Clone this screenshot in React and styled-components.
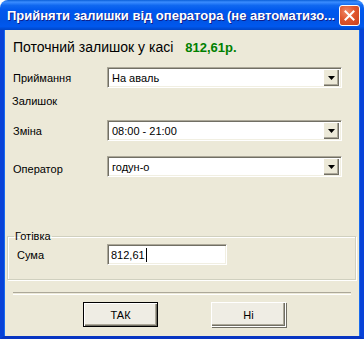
import React from 'react';
import styled, { createGlobalStyle } from 'styled-components';

const GlobalStyle = createGlobalStyle`
  html, body { margin: 0; padding: 0; background: #ffffff; }
  body {
    font-family: "Liberation Sans", Arial, sans-serif;
    font-size: 11px;
    color: #000;
  }
`;

const Window = styled.div`
  width: 364px;
  height: 339px;
  display: flex;
  flex-direction: column;
  box-sizing: border-box;
`;

const TitleBar = styled.div`
  height: 30px;
  flex: none;
  display: flex;
  align-items: center;
  justify-content: space-between;
  padding: 0 4px 0 7px;
  box-sizing: border-box;
  border-radius: 8px 8px 0 0;
  background: linear-gradient(
    to bottom,
    #0a5fd8 0%,
    #3b8dff 7%,
    #1068f0 18%,
    #0058ee 35%,
    #0055e6 70%,
    #0058ee 88%,
    #0045c6 100%
  );
  color: #fff;
  font-family: "Liberation Sans", Arial, sans-serif;
  font-weight: bold;
  font-size: 13px;
  text-shadow: 1px 1px #0f1e8a;
  white-space: nowrap;
`;

const CloseButton = styled.div`
  width: 21px;
  height: 21px;
  box-sizing: border-box;
  border: 1px solid #fff;
  border-radius: 3px;
  background: radial-gradient(circle at 35% 30%, #f08a6a 0%, #e0562e 45%, #c8401c 100%);
  display: flex;
  align-items: center;
  justify-content: center;
`;

const Body = styled.div`
  flex: 1;
  background: #ece9d8;
  border-left: 4px solid #0842d8;
  border-right: 4px solid #0842d8;
  border-bottom: 3px solid #0735c2;
  box-shadow: inset 1px 0 #166af0, inset -1px 0 #166af0;
  display: flex;
  flex-direction: column;
  padding-top: 9px;
`;

const BalanceLine = styled.div`
  display: flex;
  align-items: center;
  height: 16px;
  padding-left: 9px;
  font-size: 14px;
`;

const BalanceValue = styled.span`
  color: #008000;
  font-weight: bold;
  font-size: 13px;
  margin-left: 12px;
`;

const Form = styled.div`
  display: grid;
  grid-template-columns: 94px 235px;
  padding-left: 9px;
  margin-top: 12px;
`;

const Label = styled.div`
  display: flex;
  align-items: center;
  height: 21px;
  padding-top: ${(p) => p.$drop || 0}px;
  box-sizing: border-box;
  margin-top: ${(p) => p.$top || 0}px;
`;

const SectionTitle = styled.div`
  grid-column: 1 / -1;
  height: 13px;
  line-height: 13px;
  margin: 7px 0 0 -1px;
`;

const Combo = styled.div`
  height: 21px;
  box-sizing: border-box;
  margin-top: ${(p) => p.$top || 0}px;
  border: 1px solid;
  border-color: #aca899 #fff #fff #aca899;
  box-shadow: inset 1px 1px #716f64, inset -1px -1px #f1efe2;
  background: #fff;
  display: flex;
  align-items: center;
  padding: 2px 2px 2px 3px;
`;

const ComboText = styled.span`
  flex: 1;
  padding-left: 1px;
  font-size: 11px;
`;

const DropButton = styled.div`
  width: 16px;
  height: 17px;
  box-sizing: border-box;
  background: #ece9d8;
  box-shadow: inset 1px 1px #fff, inset -1px -1px #716f64, inset -2px -2px #aca899;
  display: flex;
  align-items: center;
  justify-content: center;
`;

const GroupBox = styled.fieldset`
  margin: 53px 0 0 3px;
  width: 349px;
  box-sizing: border-box;
  border: 1px solid #d0d0bf;
  box-shadow: 1px 1px #fff, inset 1px 1px #fff;
  padding: 0 6px 14px 6px;
`;

const Legend = styled.legend`
  padding: 0 1px;
  font-size: 11px;
  line-height: 13px;
`;

const GroupRow = styled.div`
  display: grid;
  grid-template-columns: 90px 120px;
  padding-left: 3px;
  margin-top: 1px;
`;

const TextBox = styled.div`
  height: 21px;
  box-sizing: border-box;
  border: 1px solid;
  border-color: #aca899 #fff #fff #aca899;
  box-shadow: inset 1px 1px #716f64, inset -1px -1px #f1efe2;
  background: #fff;
  display: flex;
  align-items: center;
  padding-left: 3px;
`;

const Caret = styled.span`
  width: 1px;
  height: 14px;
  background: #000;
  margin-left: 1px;
`;

const Separator = styled.div`
  margin: 12px 0 0 9px;
  width: 338px;
  height: 1px;
  border-top: 1px solid #aca899;
  border-bottom: 1px solid #fff;
`;

const ButtonRow = styled.div`
  display: flex;
  gap: 53px;
  padding-left: 79px;
  margin-top: 7px;
`;

const Button = styled.div`
  width: 75px;
  height: 25px;
  box-sizing: border-box;
  background: #efede4;
  display: flex;
  align-items: center;
  justify-content: center;
  font-size: 11px;
  border: 1px solid ${(p) => (p.$default ? '#000' : '#fff')};
  box-shadow: ${(p) =>
    p.$default
      ? 'inset 1px 1px #fff, inset -1px -1px #716f64, inset -2px -2px #aca899'
      : '1px 1px #716f64, inset -1px -1px #716f64, inset -2px -2px #aca899'};
`;

const Arrow = () => (
  <svg width="7" height="4" viewBox="0 0 7 4">
    <polygon points="0,0 7,0 3.5,4" fill="#000" />
  </svg>
);

const ComboBox = ({ value, top }) => (
  <Combo $top={top}>
    <ComboText>{value}</ComboText>
    <DropButton>
      <Arrow />
    </DropButton>
  </Combo>
);

export default function App() {
  return (
    <>
      <GlobalStyle />
      <Window>
        <TitleBar>
          <span>Прийняти залишки від оператора (не автоматизо...</span>
          <CloseButton>
            <svg width="11" height="11" viewBox="0 0 11 11">
              <path d="M1.5 1.5 L9.5 9.5 M9.5 1.5 L1.5 9.5" stroke="#fff" strokeWidth="2" strokeLinecap="square" />
            </svg>
          </CloseButton>
        </TitleBar>
        <Body>
          <BalanceLine>
            Поточний залишок у касі
            <BalanceValue>812,61р.</BalanceValue>
          </BalanceLine>
          <Form>
            <Label>Приймання</Label>
            <ComboBox value="На аваль" />
            <SectionTitle>Залишок</SectionTitle>
            <Label $top={12}>Зміна</Label>
            <ComboBox value="08:00 - 21:00" top={12} />
            <Label $top={15} $drop={4}>Оператор</Label>
            <ComboBox value="годун-о" top={15} />
          </Form>
          <GroupBox>
            <Legend>Готівка</Legend>
            <GroupRow>
              <Label>Сума</Label>
              <TextBox>
                812,61
                <Caret />
              </TextBox>
            </GroupRow>
          </GroupBox>
          <Separator />
          <ButtonRow>
            <Button $default>ТАК</Button>
            <Button>Ні</Button>
          </ButtonRow>
        </Body>
      </Window>
    </>
  );
}
